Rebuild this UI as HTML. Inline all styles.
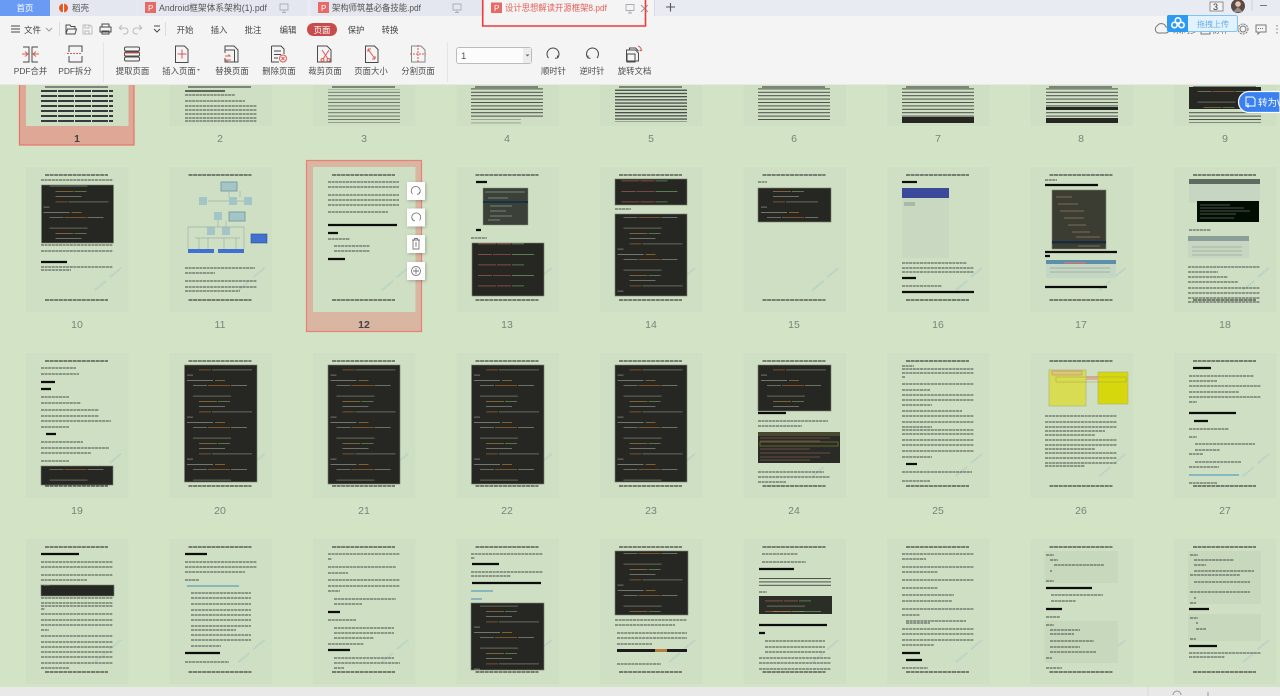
<!DOCTYPE html>
<html lang="zh"><head><meta charset="utf-8"><title>设计思想解读开源框架8.pdf</title>
<style>
html,body{margin:0;padding:0;width:1280px;height:696px;overflow:hidden;background:#d2e3c6}
svg{display:block;position:absolute;left:0;top:0}
text{font-family:"Liberation Sans","Noto Sans CJK SC",sans-serif}
.t{stroke:#454d46;stroke-width:.9;fill:none;stroke-dasharray:3 .6}
.b{stroke:#0c0e0c;stroke-width:2.2;fill:none}
.u{stroke:#3c8fb8;stroke-width:1;fill:none}
.k{fill:#262821;stroke:#76806f;stroke-width:.6}
.n{font-size:10.5px;fill:#77847a;text-anchor:middle}
.m{font-size:8.4px;fill:#4d4d4d;text-anchor:middle}
.i{fill:none;stroke:#4a4a4a;stroke-width:1}
.g{fill:none;stroke:#9a9a9a;stroke-width:1}
.r{fill:none;stroke:#dd5a55;stroke-width:1}
</style></head>
<body>
<svg width="1280" height="696" viewBox="0 0 1280 696" xmlns="http://www.w3.org/2000/svg">
<defs>
<filter id="bl" x="-2%" y="-2%" width="104%" height="104%"><feGaussianBlur stdDeviation=".35"/></filter>
<pattern id="d" width="40" height="3.4" patternUnits="userSpaceOnUse"><rect width="40" height="1" fill="#4a504a"/></pattern>
<pattern id="e" width="40" height="3.2" patternUnits="userSpaceOnUse"><rect width="40" height="1.3" fill="#23272a"/></pattern>
<pattern id="c" x="41.5" y="0" width="143.5" height="42" patternUnits="userSpaceOnUse"><g opacity=".62"><rect x="2" y="2" width="26" height=".8" fill="#bfc4b5"/><rect x="30" y="2" width="10" height=".8" fill="#d79a3c"/><rect x="8" y="7.200" width="14" height=".8" fill="#a9b09c"/><rect x="23" y="7.200" width="22" height=".8" fill="#c9803a"/><rect x="46" y="7.200" width="16" height=".8" fill="#b5b8a8"/><rect x="8" y="17.700" width="38" height=".8" fill="#a9b09c"/><rect x="14" y="23" width="18" height=".8" fill="#d0a24a"/><rect x="33" y="23" width="12" height=".8" fill="#8ec07a"/><rect x="14" y="28.200" width="26" height=".8" fill="#b5b8a8"/><rect x="14" y="33.500" width="12" height=".8" fill="#c9803a"/><rect x="27" y="33.500" width="40" height=".8" fill="#a9b09c"/><rect x="2" y="38.700" width="6" height=".8" fill="#bfc4b5"/></g></pattern>
<pattern id="f" x="41.5" y="0" width="143.5" height="21" patternUnits="userSpaceOnUse"><g opacity=".7"><rect x="6" y="2" width="14" height=".8" fill="#c96a5c"/><rect x="21" y="2" width="18" height=".8" fill="#c75a55"/><rect x="40" y="2" width="22" height=".8" fill="#7fbf72"/><rect x="6" y="12.500" width="18" height=".8" fill="#c96a5c"/><rect x="25" y="12.500" width="14" height=".8" fill="#d2695c"/><rect x="40" y="12.500" width="12" height=".8" fill="#77b86a"/></g></pattern>
<g id="pg"><rect width="102.5" height="145" fill="#cfdfc3"/><path d="M19 8h63M19 133h63" stroke="#1d1f1d" stroke-width="1.1" fill="none" stroke-dasharray="4 .6"/><path d="M69 123l11-9M84 110l11-9" stroke="#b4d0c6" stroke-width="2" fill="none" stroke-dasharray="1.500 .7"/></g>
</defs>

<rect width="1280" height="696" fill="#d2e3c6"/>

<!-- selection frames -->
<rect x="19.500" y="70" width="114.500" height="75" fill="#dfa896" stroke="#e9736b" stroke-width="1.200"/>
<rect x="306.500" y="160.500" width="115" height="171" fill="#d8b6a1" stroke="#e9807a" stroke-width="1.200"/>

<g filter="url(#bl)">
<!-- row 1 -->
<g fill="#cfdfc3"><rect x="26" y="80" width="102.500" height="46"/><rect x="169.500" y="80" width="102.500" height="46"/><rect x="313" y="80" width="102.500" height="46"/><rect x="456.500" y="80" width="102.500" height="46"/><rect x="600" y="80" width="102.500" height="46"/><rect x="743.500" y="80" width="102.500" height="46"/><rect x="887" y="80" width="102.500" height="46"/><rect x="1030.500" y="80" width="102.500" height="46"/><rect x="1174" y="80" width="102.500" height="46"/></g>
<path d="M45 87h63M188 87h63M332 87h63M475 87h63M619 87h63M762 87h63M906 87h63M1049 87h63M1193 87h63" stroke="#2a2d2a" stroke-width="1"/>
<path d="M41 91h72M41 96h72M41 101h72M41 106h72M41 111h72M41 116h72M41 121h72" stroke="#20242e" stroke-width="1.800" stroke-dasharray="16 1"/>
<path class="t" d="M185 95h50M185 101h60M185 106h72M185 110h72M185 114h72M185 118h72M185 121h72"/>
<path d="M185 91h40" stroke="#222" stroke-width="1.200"/>
<rect x="328" y="89" width="72" height="34" fill="url(#d)" opacity=".75"/>
<rect x="471" y="88" width="72" height="30" fill="url(#d)"/><rect x="471" y="118" width="50" height="6" fill="url(#d)" opacity=".4"/>
<rect x="615" y="88" width="72" height="34" fill="url(#e)" opacity=".8"/>
<rect x="758" y="88" width="72" height="32" fill="url(#d)"/>
<rect x="902" y="88" width="72" height="29" fill="url(#d)"/><rect x="902" y="117" width="72" height="6" fill="#262821"/>
<rect x="1046" y="88" width="72" height="35" fill="url(#d)"/><rect x="1046" y="107" width="72" height="3" fill="#262821"/><rect x="1046" y="118" width="72" height="5" fill="#262821"/>
<rect x="1189" y="87" width="72" height="22" fill="#262821"/><rect x="1189" y="87" width="72" height="22" fill="url(#c)"/><rect x="1189" y="110" width="72" height="13" fill="url(#d)"/>

<!-- row 2 -->
<use href="#pg" x="26" y="167"/><use href="#pg" x="169.5" y="167"/><use href="#pg" x="313" y="167"/><use href="#pg" x="456.5" y="167"/><use href="#pg" x="600" y="167"/><use href="#pg" x="743.5" y="167"/><use href="#pg" x="887" y="167"/><use href="#pg" x="1030.5" y="167"/><use href="#pg" x="1174" y="167"/>
<!-- 10 -->
<path class="t" d="M41 180h72M41 245h72M41 251h72M41 267h72M41 270h30"/><path class="b" d="M41 262h26" stroke-width="2"/>
<rect class="k" x="41.500" y="185" width="72" height="58"/><rect x="41.500" y="185" width="72" height="58" fill="url(#c)"/>
<!-- 11 -->
<g fill="#a3c5c8"><rect x="221" y="182" width="16" height="9" stroke="#7f9ea2"/><rect x="199" y="197" width="8" height="8"/><rect x="229" y="197" width="8" height="8"/><rect x="244" y="197" width="8" height="8"/><rect x="214" y="212" width="8" height="8"/><rect x="229" y="212" width="16" height="9" stroke="#7f9ea2"/><rect x="207" y="227" width="8" height="8"/><rect x="222" y="227" width="8" height="8"/></g>
<rect x="251" y="234" width="16" height="9" fill="#3f6fd0" stroke="#2a4f98" stroke-width=".6"/><rect x="188" y="249" width="26" height="4" fill="#3f6fd0"/><rect x="218" y="249" width="26" height="4" fill="#3f6fd0"/>
<path d="M229 191v6M240 191v6M218 220v7M226 221v6M188 227h56M188 227v22M244 227v22M195 238h45M199 238v11M208 238v11M224 238v11M236 238v11M208 201h21M237 201h7" stroke="#9db3a7" stroke-width=".7" fill="none"/>
<path class="t" d="M185 268h70M185 273h30M185 281h72M185 287h72M185 291h55"/>
<!-- 12 -->
<path class="t" d="M328 182h71M328 187h71M328 195h71M328 200h71M328 205h71M328 212h60M328 239h22M334 246h36M334 251h36"/><path class="b" d="M328 225h69M328 233h10M328 259h17" stroke-width="1.800"/>
<!-- 13 -->
<path class="b" d="M476 182h11M476 230h5" stroke-width="2"/><path class="t" d="M471 238h16"/>
<rect x="483" y="188" width="45" height="37" fill="#3b4138" stroke="#89937f" stroke-width=".5"/><rect x="483" y="201" width="45" height="2" fill="#12324a"/><path d="M485 192h40M488 198h20M490 206h22M490 211h16M490 216h22M488 220h12" stroke="#8a9a88" stroke-width=".7"/>
<rect class="k" x="472" y="243" width="72" height="53"/><rect x="472" y="243" width="72" height="53" fill="url(#f)"/>
<!-- 14 -->
<rect class="k" x="615" y="179" width="72" height="26"/><rect x="615" y="179" width="72" height="26" fill="url(#f)"/><path class="t" d="M615 209h16"/>
<rect class="k" x="615" y="214" width="72" height="82"/><rect x="615" y="214" width="72" height="82" fill="url(#c)"/>
<!-- 15 -->
<path class="t" d="M758 182h9"/><rect class="k" x="758" y="188" width="73" height="34"/><rect x="758" y="188" width="60" height="34" fill="url(#c)"/>
<!-- 16 -->
<path class="b" d="M902 182h15" stroke-width="2"/><rect x="902" y="188" width="47" height="10" fill="#3a4a9a"/><rect x="902" y="198" width="47" height="60" fill="#c9d8c0"/><rect x="904" y="202" width="11" height="4" fill="#aab8a6"/>
<path class="t" d="M902 263h65M902 268h72M902 272h72M902 286h40"/><path class="b" d="M902 278h14M902 292h72" stroke-width="1.500"/>
<!-- 17 -->
<path class="t" d="M1045 180h12"/><path class="b" d="M1045 185h53M1045 252h72M1045 256h5M1045 287h62" stroke-width="1.400"/>
<rect x="1052" y="190" width="54" height="59" fill="#3a3e30" stroke="#7c8874" stroke-width=".6"/><rect x="1052" y="241" width="54" height="2.400" fill="#122a40"/><path d="M1056 197h16M1058 204h20M1060 211h24M1064 218h20M1068 225h18M1072 232h18M1076 237h24M1078 246h22" stroke="#7d6c55" stroke-width="1"/>
<rect x="1046" y="260" width="70" height="18" fill="#c4d6c4"/><rect x="1046" y="260" width="70" height="4" fill="#5d90a8"/><rect x="1064" y="262" width="22" height="1.500" fill="#c47a7a"/><path d="M1050 268h60M1050 272h60" stroke="#97a79a" stroke-width=".7"/>
<!-- 18 -->
<rect x="1189" y="179" width="71" height="24" fill="#c6d6c2"/><rect x="1189" y="179" width="71" height="5" fill="#5f6a60"/><rect x="1197" y="201" width="62" height="21" fill="#060806"/><path d="M1200 205h30M1200 208h44M1200 211h50M1200 214h36M1200 218h34" stroke="#8f9c8f" stroke-width=".6"/>
<path class="t" d="M1189 230h22M1188 267h72M1188 272h30M1188 277h40M1188 282h50M1188 288h72M1188 293h72M1188 298h72M1188 302h72"/>
<rect x="1188" y="236" width="61" height="22" fill="#c7d6c2"/><rect x="1188" y="236" width="61" height="5" fill="#8a9f97"/><path d="M1192 247h50M1192 251h50M1192 255h50" stroke="#9aa896" stroke-width=".7"/>

<!-- row 3 -->
<use href="#pg" x="26" y="353"/><use href="#pg" x="169.5" y="353"/><use href="#pg" x="313" y="353"/><use href="#pg" x="456.5" y="353"/><use href="#pg" x="600" y="353"/><use href="#pg" x="743.5" y="353"/><use href="#pg" x="887" y="353"/><use href="#pg" x="1030.5" y="353"/><use href="#pg" x="1174" y="353"/>
<!-- 19 -->
<path class="t" d="M41 368h35M41 374h38M41 397h28M41 403h40M41 410h58M41 416h58M41 421h70M41 427h28M41 442h42M41 448h68M41 453h50M41 461h28"/><path class="b" d="M41 382h14M41 389h10M46 434h10" stroke-width="2"/>
<rect class="k" x="41" y="466" width="72" height="19"/><rect x="41" y="466" width="72" height="19" fill="url(#c)"/>
<!-- 20-23 -->
<rect class="k" x="184.500" y="365" width="72.500" height="117"/><rect x="184.500" y="365" width="72.500" height="117" fill="url(#c)"/>
<rect class="k" x="328" y="365" width="72" height="119"/><rect x="328" y="365" width="72" height="119" fill="url(#c)"/>
<rect class="k" x="471.500" y="365" width="72.500" height="119"/><rect x="471.500" y="365" width="72.500" height="119" fill="url(#c)"/>
<rect class="k" x="615" y="365" width="72" height="117"/><rect x="615" y="365" width="72" height="117" fill="url(#c)"/>
<!-- 24 -->
<rect class="k" x="758" y="365" width="73" height="46"/><rect x="758" y="365" width="73" height="46" fill="url(#c)"/>
<path class="b" d="M758 413h28" stroke-width="1.500"/><path class="t" d="M758 421h70M758 426h44M758 472h66M758 477h72M758 482h28"/>
<rect x="758" y="432" width="82" height="31" fill="#2a2c26"/><rect x="758" y="432" width="82" height="4" fill="#4a4a30"/><rect x="760" y="442" width="78" height="4" fill="none" stroke="#8d8d30" stroke-width=".6"/><path d="M760 438h70M760 441h60M760 449h50M760 453h70M760 457h60M760 460h50" stroke="#7d5b4c" stroke-width=".7"/>
<!-- 25 -->
<path class="t" d="M902 366h12M902 369h72M902 373h72M902 377h3M902 384h72M902 390h28M902 395h72M902 400h72M902 405h30M902 411h60M902 416h72M902 422h72M902 427h30M902 430h72M902 434h72M902 440h72M902 445h72M902 451h72M902 457h30M902 472h70M902 481h28"/><path class="b" d="M906 464h11" stroke-width="2"/>
<!-- 26 -->
<rect x="1049" y="370" width="37" height="36" fill="#d8dc52" stroke="#a8ad80" stroke-width=".6"/><rect x="1098" y="372" width="30" height="32" fill="#d6d80c" stroke="#a8ad80" stroke-width=".6"/><rect x="1052" y="371" width="30" height="4" fill="#d7c87a" stroke="#c07a70" stroke-width=".5"/><rect x="1086" y="376" width="12" height="4" fill="#d8b0a0"/><rect x="1056" y="377" width="70" height="5" fill="none" stroke="#a8a040" stroke-width=".5"/>
<path class="t" d="M1045 416h72M1045 422h72M1045 427h72M1045 431h60M1045 435h50M1045 440h72M1045 445h72M1045 449h50M1045 453h72M1045 458h72M1045 463h72M1045 466h40"/>
<!-- 27 -->
<path class="b" d="M1193 368h18M1189 413h47M1194 421h14" stroke-width="2"/><path class="t" d="M1189 376h65M1189 381h28M1189 386h72M1189 392h50M1189 397h72M1189 402h8M1189 429h40M1189 437h8M1195 444h60M1195 450h25M1189 454h14M1195 462h46M1189 467h30M1189 483h28"/><path class="u" d="M1189 475h50"/>

<!-- row 4 -->
<use href="#pg" x="26" y="539"/><use href="#pg" x="169.5" y="539"/><use href="#pg" x="313" y="539"/><use href="#pg" x="456.5" y="539"/><use href="#pg" x="600" y="539"/><use href="#pg" x="743.5" y="539"/><use href="#pg" x="887" y="539"/><use href="#pg" x="1030.5" y="539"/><use href="#pg" x="1174" y="539"/>
<!-- 28 -->
<path class="b" d="M41 554h38" stroke-width="2"/><path class="t" d="M41 562h72M41 567h72M41 575h72M41 580h46M41 598h72M41 603h72M41 606h72M41 609h4M41 614h72M41 620h72M41 625h72M41 630h8M41 636h72M41 642h72M41 647h72M41 652h72M41 657h72M41 663h72M41 668h28"/>
<rect class="k" x="41" y="585" width="73" height="11"/><rect x="41" y="585" width="60" height="5" fill="url(#c)"/>
<!-- 29 -->
<path class="b" d="M185 554h22M185 653h35" stroke-width="2"/><path class="t" d="M185 562h72M185 567h72M185 572h60M185 580h14M191 593h60M191 598h60M191 604h60M191 610h60M191 615h60M191 620h60M191 626h60M191 630h45M191 635h60M191 640h60M191 646h30M185 662h44"/><path class="u" d="M187 586h52"/>
<!-- 30 -->
<path class="b" d="M328 612h12M328 650h22" stroke-width="2"/><path class="t" d="M328 554h72M328 559h4M328 567h68M328 573h20M328 580h72M328 586h72M328 591h12M334 599h62M334 604h28M328 620h28M334 628h60M334 633h60M334 638h40M328 644h36M334 658h60M334 663h66M334 668h10"/>
<!-- 31 -->
<path class="b" d="M472 564h27M472 583h69" stroke-width="1.600"/><path class="t" d="M471 554h72M471 558h4M471 572h72M471 576h40"/><path class="u" d="M471 591h22M471 599h11"/>
<rect class="k" x="471" y="603" width="73" height="67"/><rect x="471" y="603" width="73" height="67" fill="url(#c)"/>
<!-- 32 -->
<rect class="k" x="615" y="551" width="73" height="64"/><rect x="615" y="551" width="73" height="64" fill="url(#c)"/>
<path class="t" d="M615 620h72M615 625h60M617 633h70M617 638h70M617 644h35M617 664h44"/><rect x="617" y="649" width="70" height="3" fill="#1c1e1a"/><rect x="655" y="649" width="12" height="3" fill="#b5803e"/>
<!-- 33 -->
<path class="t" d="M762 554h36M762 562h44M759 592h8M765 641h60M765 647h60M765 652h60M759 658h72M759 663h72M759 669h72"/><path class="b" d="M759 569h35M759 625h68M759 633h6" stroke-width="1.800"/>
<rect x="759" y="576" width="72" height="12" fill="url(#d)"/><rect x="759" y="596" width="73" height="18" fill="#2c2d25"/><rect x="759" y="596" width="73" height="18" fill="url(#f)"/><rect x="759" y="596" width="73" height="18" fill="url(#c)"/>
<!-- 34 -->
<path class="t" d="M902 554h72M902 559h24M902 567h72M902 572h36M902 580h72M902 588h36M902 595h52M902 601h50M902 609h72M902 615h18M906 621h60M906 623h24M902 629h72M902 634h72M902 640h72M902 645h32M902 668h26"/><path class="b" d="M902 653h18M906 660h16" stroke-width="1.800"/>
<!-- 35 -->
<rect x="1044.500" y="551" width="73.500" height="32" fill="#c8d8bc"/><rect x="1044.500" y="621" width="73.500" height="42" fill="#c8d8bc"/>
<path class="t" d="M1046 555h8M1050 560h8M1054 565h50M1050 571h2M1046 581h8M1051 595h52M1051 601h25M1046 617h14M1046 625h8M1050 630h30M1050 634h24M1050 641h44M1050 647h30M1050 652h46M1046 658h6M1046 668h16"/><path class="b" d="M1046 588h46M1046 609h16" stroke-width="1.600"/>
<!-- 36 -->
<rect x="1188" y="551" width="73" height="53" fill="#c8d8bc"/><rect x="1188" y="614" width="73" height="27" fill="#c8d8bc"/>
<path class="t" d="M1190 555h8M1194 560h40M1194 565h12M1194 571h60M1190 575h50M1194 582h56M1190 592h60M1194 598h2M1190 603h6M1190 618h8M1196 623h2M1196 629h10M1190 639h6M1189 653h72M1189 657h36"/><path class="b" d="M1189 609h20M1189 646h28" stroke-width="1.600"/>
</g>

<!-- page numbers -->
<g>
<text class="n" x="77" y="142" style="font-weight:700;fill:#444">1</text><text class="n" x="220" y="142">2</text><text class="n" x="364" y="142">3</text><text class="n" x="507" y="142">4</text><text class="n" x="651" y="142">5</text><text class="n" x="794" y="142">6</text><text class="n" x="938" y="142">7</text><text class="n" x="1081" y="142">8</text><text class="n" x="1225" y="142">9</text>
<text class="n" x="77" y="328">10</text><text class="n" x="220" y="328">11</text><text class="n" x="364" y="328" style="font-weight:700;fill:#444">12</text><text class="n" x="507" y="328">13</text><text class="n" x="651" y="328">14</text><text class="n" x="794" y="328">15</text><text class="n" x="938" y="328">16</text><text class="n" x="1081" y="328">17</text><text class="n" x="1225" y="328">18</text>
<text class="n" x="77" y="514">19</text><text class="n" x="220" y="514">20</text><text class="n" x="364" y="514">21</text><text class="n" x="507" y="514">22</text><text class="n" x="651" y="514">23</text><text class="n" x="794" y="514">24</text><text class="n" x="938" y="514">25</text><text class="n" x="1081" y="514">26</text><text class="n" x="1225" y="514">27</text>
</g>

<!-- floating side buttons -->
<g fill="#fff" style="filter:drop-shadow(1px 1px 1.5px rgba(0,0,0,.25))"><rect x="407" y="182" width="18" height="18"/><rect x="407" y="208.500" width="18" height="18"/><rect x="407" y="235" width="18" height="18"/><rect x="407" y="262" width="18" height="18"/></g>
<g fill="none"><path stroke="#777" stroke-width=".9" d="M412.500 194a4.500 4.500 0 1 1 6.500 0M419 194l.5-2M419 194l-2 .3M419.500 220.500a4.500 4.500 0 1 0-6.500 0M413 220.500l-.5-2M413 220.500l2 .3M412 240h8M413 240v9h6v-9M414.500 240v-1.500h3v1.500M416 242v5M416 268v6M413 271h6"/><circle cx="416" cy="271" r="4.500" stroke="#777" stroke-width=".9"/></g>

<!-- bottom bar -->
<rect y="687" width="1280" height="9" fill="#e9e9e9"/>
<path d="M1148 687v9" stroke="#dcdcdc"/>
<path d="M1173 695a4 4 0 0 1 8 0M1208 692v4" stroke="#999" fill="none"/>

<!-- toolbar -->
<rect y="0" width="1280" height="84" fill="#f4f4f4"/>
<rect y="84" width="1280" height="1" fill="#e8ebe5"/>
<!-- tab bar -->
<rect y="0" width="1280" height="16" fill="#e9ebf2"/>
<rect width="50" height="16" fill="#6a9bf4"/>
<text x="25" y="11" font-size="8.500" fill="#fff" text-anchor="middle">首页</text>
<rect x="51" width="86" height="16" fill="#e4e7ef"/><rect x="138" width="169" height="16" fill="#e4e7ef"/><rect x="311" width="171" height="16" fill="#e4e7ef"/>
<circle cx="63.500" cy="8" r="4.500" fill="#ea5420"/><path d="M63.500 3v10" stroke="#fff" stroke-width="1.200"/>
<text x="72" y="11" font-size="8.500" fill="#555">稻壳</text>
<rect x="145" y="2" width="11" height="11" fill="#e66a66"/><text x="148" y="11" font-size="8" fill="#fff">P</text>
<text x="159" y="11" font-size="9" fill="#555" textLength="108" lengthAdjust="spacingAndGlyphs">Android框架体系架构(1).pdf</text>
<path d="M280 4h8v6h-8zM284 10v2M282 12.500h4" stroke="#a9adb3" fill="none" stroke-width=".9"/>
<rect x="318" y="2" width="11" height="11" fill="#e66a66"/><text x="321" y="11" font-size="8" fill="#fff">P</text>
<text x="332" y="11" font-size="9" fill="#555" textLength="89" lengthAdjust="spacingAndGlyphs">架构师筑基必备技能.pdf</text>
<path d="M453 4h8v6h-8zM457 10v2M455 12.500h4" stroke="#a9adb3" fill="none" stroke-width=".9"/>
<rect x="484" y="0" width="171" height="16" fill="#f4f4f4"/><path d="M654.500 0v16" stroke="#d6dae2"/>
<rect x="491" y="2.500" width="11" height="10.500" fill="#e66a66"/><text x="494" y="11" font-size="8" fill="#fff">P</text>
<text x="505" y="11" font-size="9" fill="#e8605c" textLength="102" lengthAdjust="spacingAndGlyphs">设计思想解读开源框架8.pdf</text>
<path d="M626 4.500h8v6h-8zM630 10.500v2M628 13h4" stroke="#a9adb3" fill="none" stroke-width=".9"/>
<path d="M641 5l7 7M648 5l-7 7" stroke="#9a9a9a" fill="none"/>
<path d="M666 7h9M670.500 3v8.500" stroke="#555" stroke-width="1.100"/>
<path d="M482.700 -2V26H645.500V-2" fill="none" stroke="#ee3a3a" stroke-width="1.600"/>
<!-- top right -->
<rect x="1210" y="2" width="13" height="9" fill="#f4f4f4" stroke="#777" stroke-width=".8"/><text x="1215.500" y="10" font-size="9" fill="#333" text-anchor="middle">3</text>
<circle cx="1238" cy="6" r="7" fill="#5b4a44"/><circle cx="1238" cy="4" r="2.800" fill="#e3c7b4"/><path d="M1233 12l5-5 5 5z" fill="#9a8e88"/>
<path d="M1252 0v11" stroke="#d0d2d8"/><path d="M1260 5.500h7" stroke="#777"/>

<!-- menu row -->
<path class="i" d="M11 26h9M11 29h9M11 32h9"/>
<text x="24" y="33" font-size="8.500" fill="#444">文件</text>
<path class="g" d="M46 28l3 3 3-3"/>
<path d="M59.500 22v14M165.500 22v14" stroke="#dcdcdc"/>
<path class="i" d="M66 34v-9h4l1 1.500h4v2M66 34l1.500-5h9L75 34z"/>
<path d="M83 25h7l2 2v7h-9zM85 25v3h4v-3M85 34v-3h4v3" style="fill:none;stroke:#bbb"/>
<path class="i" d="M102 27v-3h7v3M100 27h11v5h-11zM102 31h7v3h-7z"/>
<path d="M119 28l3-3M119 28l3 2M119 28h6a3 3 0 0 1 0 6h-2M142 28l-3-3M142 28l-3 2M142 28h-6a3 3 0 0 0 0 6h2" style="fill:none;stroke:#bbb"/>
<path class="i" d="M154 26h6M154 29l3 3 3-3" stroke-width=".9"/>
<g font-size="8.400" fill="#444" text-anchor="middle"><text x="185" y="33">开始</text><text x="219" y="33">插入</text><text x="253" y="33">批注</text><text x="288" y="33">编辑</text><text x="356" y="33">保护</text><text x="390" y="33">转换</text></g>
<rect x="307" y="23" width="30" height="13" rx="6.500" fill="#c94c4c"/><text x="322" y="33" font-size="8.400" fill="#fff" text-anchor="middle">页面</text>

<!-- right controls -->
<path d="M1158 33h8a3 3 0 0 0 0-6 5 5 0 0 0-9-1 4 4 0 0 0 1 7z" style="fill:none;stroke:#777"/>
<text x="1173" y="33" font-size="8.500" fill="#666">未同步</text>
<rect x="1201" y="26" width="9" height="8" fill="none" stroke="#777"/><text x="1212" y="33" font-size="8.500" fill="#666">协作</text>
<circle cx="1243" cy="29" r="3" fill="none" stroke="#777"/><circle cx="1243" cy="29" r="5" fill="none" stroke="#777" stroke-dasharray="2 1"/>
<path d="M1256 25h10v7h-6l-2 2v-2h-2z" fill="none" stroke="#777"/><path d="M1258 28.500h6" stroke="#777" stroke-dasharray="1 1"/>
<path d="M1277 25v10" stroke="#777" stroke-dasharray="1.500 2"/>

<!-- upload widget -->
<rect x="1167.500" y="15.500" width="70" height="16" rx="2" fill="#e3f2ff" stroke="#7cc4fb"/>
<path d="M1167 17a2 2 0 0 1 2-2h19v17h-19a2 2 0 0 1-2-2z" fill="#2b9af3"/>
<circle cx="1178" cy="20.500" r="2.700" fill="none" stroke="#fff" stroke-width="1.600"/><circle cx="1174.500" cy="25" r="2.700" fill="none" stroke="#fff" stroke-width="1.600"/><circle cx="1181.500" cy="25" r="2.700" fill="none" stroke="#fff" stroke-width="1.600"/>
<text x="1197" y="27" font-size="8" fill="#65aee6">拖拽上传</text>

<!-- ribbon -->
<path d="M103.500 42v40M447.500 42v40" stroke="#e4e4e4"/>
<g>
<path class="i" d="M23 47h6v15h-6M38 47h-6v15h6"/><path class="r" d="M22 54h6M25 51.500l3 2.500-3 2.500M39 54h-6M36 51.500l-3 2.500 3 2.500"/>
<path class="i" d="M69 52v-6h13v6M69 56v6h13v-6"/><path class="r" d="M67 53.500h15" stroke-dasharray="2 1"/>
<rect class="i" x="124.500" y="47" width="15" height="4" rx="1.500"/><rect class="i" x="124.500" y="57" width="15" height="4" rx="1.500"/><rect class="i" x="124.500" y="52" width="15" height="4" rx="1"/><path class="r" d="M124 53h16"/>
<path class="i" d="M175.500 46h9l3.500 3.500v13h-12.500z"/><path class="r" d="M177.500 54h9M182 49.500v9"/>
<path class="i" d="M225 50v-4h9l4 4v12h-4M229 50h5.500v12h-9.500v-4M225 53v-3h4"/><path class="r" d="M225 56h5l-1.500-1.500M231 60h-5l1.500 1.500"/>
<path class="i" d="M271.500 46h9.500l3 3v5M279 62h-7.500V46M274 51h7M274 54.500h7M274 58h4"/><circle class="r" cx="283" cy="58.500" r="3.500"/><path class="r" d="M281.500 57l3 3M284.500 57l-3 3"/>
<path class="i" d="M317.500 46h9.500l4 4v12h-13.500z"/><path class="r" d="M322 50l6 9M329 50l-6 9"/><circle class="r" cx="322.500" cy="60" r="1.500"/><circle class="r" cx="328.500" cy="60" r="1.500"/>
<path class="i" d="M365.500 46h9l3.500 3.500v13h-12.500z"/><path class="r" d="M368 49l7 10M368 49v3M368 49h3M375 59v-3M375 59h-3"/>
<path class="i" d="M411.500 46h9.500l4 4v12h-13.500z" style="stroke:#888"/><path class="r" d="M418 45v18M410 54h16" stroke-dasharray="2 1"/>
</g>
<g><text class="m" x="30.500" y="74">PDF合并</text><text class="m" x="75" y="74">PDF拆分</text><text class="m" x="132.500" y="74">提取页面</text><text class="m" x="179" y="74">插入页面</text><text class="m" x="232" y="74">替换页面</text><text class="m" x="279" y="74">删除页面</text><text class="m" x="325" y="74">裁剪页面</text><text class="m" x="371" y="74">页面大小</text><text class="m" x="418" y="74">分割页面</text><text class="m" x="553.500" y="74">顺时针</text><text class="m" x="592" y="74">逆时针</text><text class="m" x="634.500" y="74">旋转文档</text></g>
<path d="M197 69l3 0-1.500 2z" fill="#777"/>
<rect x="456.500" y="47.500" width="75" height="16" rx="2.500" fill="#fcfcfc" stroke="#bcbcbc"/><rect x="523" y="48" width="8" height="15" fill="#ececec"/><path d="M525.500 54.500h4l-2 2z" fill="#666"/>
<text x="461" y="59" font-size="9.500" fill="#555">1</text>
<path class="i" d="M548.500 58a6 6 0 1 1 9 0M557.500 58v-2.500M557.500 58l-2.500.3"/>
<path class="i" d="M597 58a6 6 0 1 0-9 0M588 58v-2.500M588 58l2.500.3"/>
<path class="i" d="M626.500 50h9l3 3v8h-12zM629.500 50v-2h6l3 3"/><rect x="627" y="54" width="8" height="8" fill="none" stroke="#4a4a4a"/><path class="r" d="M638 46a4 4 0 0 1 3 5M641 51l-1.500-1M641 51l1-1.500"/>

<!-- convert button -->
<path d="M1280 91.500h-31a10.500 10.500 0 0 0 0 21h31z" fill="#3b80f0" stroke="#fff" stroke-width="1.200"/>
<path d="M1246 97h7l2 2v7h-9z" fill="none" stroke="#fff"/><path d="M1248 103v4M1246.500 105.500l1.500 1.500 1.500-1.500" stroke="#fff" fill="none"/>
<text x="1258" y="106" font-size="9.500" fill="#fff">转为W</text>
</svg>
</body></html>
